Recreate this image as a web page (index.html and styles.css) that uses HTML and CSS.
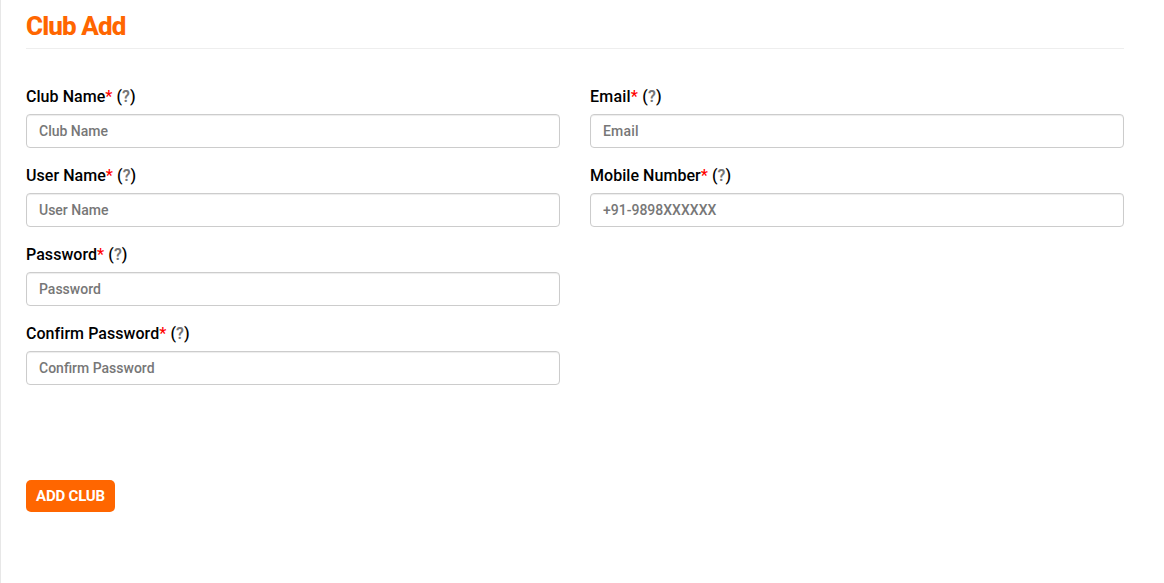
FILE: index.html
```html
<!DOCTYPE html>
<html lang="en">
<head>
  <meta charset="UTF-8">
  <meta name="viewport" content="width=device-width, initial-scale=1.0">
  <title>Club Add</title>
  <link rel="stylesheet" href="styles.css">
</head>
<body>
  <div class="page-wrapper">
    <h1 class="page-header">Club Add</h1>
    <form class="club-form">
      <div class="row">
        <div class="col">
          <div class="form-group">
            <label for="club-name">Club Name<span class="required">*</span> (<span class="help">?</span>)</label>
            <input type="text" id="club-name" placeholder="Club Name">
          </div>
          <div class="form-group">
            <label for="user-name">User Name<span class="required">*</span> (<span class="help">?</span>)</label>
            <input type="text" id="user-name" placeholder="User Name">
          </div>
          <div class="form-group">
            <label for="password">Password<span class="required">*</span> (<span class="help">?</span>)</label>
            <input type="password" id="password" placeholder="Password">
          </div>
          <div class="form-group">
            <label for="confirm-password">Confirm Password<span class="required">*</span> (<span class="help">?</span>)</label>
            <input type="password" id="confirm-password" placeholder="Confirm Password">
          </div>
        </div>
        <div class="col">
          <div class="form-group email-group">
            <label for="email">Email<span class="required">*</span> (<span class="help">?</span>)</label>
            <input type="email" id="email" placeholder="Email">
          </div>
          <div class="form-group">
            <label for="mobile">Mobile Number<span class="required">*</span> (<span class="help">?</span>)</label>
            <input type="text" id="mobile" placeholder="+91-9898XXXXXX">
          </div>
        </div>
      </div>
      <button type="submit">ADD CLUB</button>
    </form>
  </div>
</body>
</html>
```
FILE: styles.css
```css
* {
  margin: 0;
  padding: 0;
  box-sizing: border-box;
  font-family: Roboto, sans-serif;
}

body {
  background: #fff;
  color: #000;
}

.page-wrapper {
  min-height: 100vh;
  padding: 11px 40px 0 25px;
  border-left: 1px solid #e7e7e7;
}

.page-header {
  height: 38px;
  margin-bottom: 35px;
  border-bottom: 1px solid #eee;
  color: #ff6600;
  font-size: 26px;
  font-weight: 800;
  line-height: 30px;
  letter-spacing: -0.9px;
}

.row {
  display: grid;
  grid-template-columns: 1fr 1fr;
  gap: 30px;
  margin-bottom: 80px;
}

.form-group {
  margin-bottom: 15px;
}

label {
  display: block;
  height: 25px;
  margin-bottom: 5px;
  font-size: 16px;
  font-weight: 500;
  line-height: 25px;
  letter-spacing: 0.05px;
  white-space: nowrap;
}

.email-group label,
.email-group input {
  letter-spacing: 0.2px;
}

.required {
  color: red;
}

.help {
  color: #777;
  font-weight: 600;
}

input {
  display: block;
  width: 100%;
  height: 34px;
  padding: 6px 12px;
  border: 1px solid #ccc;
  border-radius: 4px;
  box-shadow: inset 0 1px 1px rgba(0, 0, 0, 0.075);
  font-size: 14px;
  font-weight: 500;
}

input::placeholder {
  color: #777;
}

button {
  display: block;
  width: 89px;
  height: 32px;
  border: none;
  border-radius: 5px;
  background: #ff6600;
  color: #fff;
  font-size: 15px;
  font-weight: 700;
  letter-spacing: -0.2px;
  cursor: pointer;
}
```
